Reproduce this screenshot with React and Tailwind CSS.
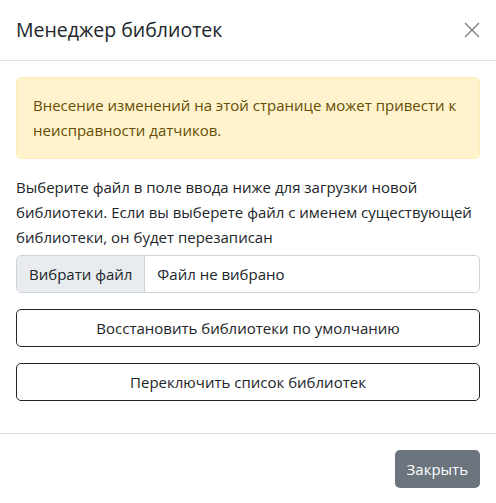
export default function App() {
  return (
    <div className="min-h-screen w-[496px] bg-white text-[#212529]" style={{ fontFamily: '"Open Sans", "Noto Sans", sans-serif' }}>
      <div className="flex h-[61px] items-center justify-between border-b border-[#dee2e6] px-4">
        <h5 className="text-[19.5px] font-medium leading-[30px]">Менеджер библиотек</h5>
        <button className="flex h-4 w-4 items-center justify-center text-[#7a7a7a]">
          <svg width="16" height="16" viewBox="0 0 16 16" fill="none" stroke="currentColor" strokeWidth="1.3">
            <path d="M1 1L15 15M15 1L1 15" />
          </svg>
        </button>
      </div>

      <div className="p-4">
        <div className="mb-4 rounded-[5px] border border-[#ffecb5] bg-[#fff3cd] px-4 py-[15px] text-[15px] leading-[25px] text-[#664d03]">
          <span className="whitespace-nowrap">Внесение изменений на этой странице может привести к</span>
          <br />
          неисправности датчиков.
        </div>

        <p className="mb-[5px] text-[15px] leading-[25px]">
          <span className="whitespace-nowrap">Выберите файл в поле ввода ниже для загрузки новой</span>
          <br />
          <span className="whitespace-nowrap">библиотеки. Если вы выберете файл с именем существующей</span>
          <br />
          библиотеки, он будет перезаписан
        </p>

        <div className="mb-4 flex h-[38px] rounded-[5px] border border-[#ced4da] text-[15px]">
          <div className="flex items-center rounded-l-[5px] border-r border-[#ced4da] bg-[#e9ecef] px-3">Вибрати файл</div>
          <div className="flex items-center px-3">Файл не вибрано</div>
        </div>

        <button className="mb-4 flex h-[38px] w-full items-center justify-center rounded-[5px] border border-[#212529] text-[15px]">
          Восстановить библиотеки по умолчанию
        </button>
        <button className="flex h-[38px] w-full items-center justify-center rounded-[5px] border border-[#212529] text-[15px]">
          Переключить список библиотек
        </button>
      </div>

      <div className="mt-4 flex justify-end border-t border-[#dee2e6] px-4 pb-4 pt-4">
        <button className="h-[38px] rounded-[5px] bg-[#6c757d] px-3 text-[15px] text-white">Закрыть</button>
      </div>
    </div>
  );
}
